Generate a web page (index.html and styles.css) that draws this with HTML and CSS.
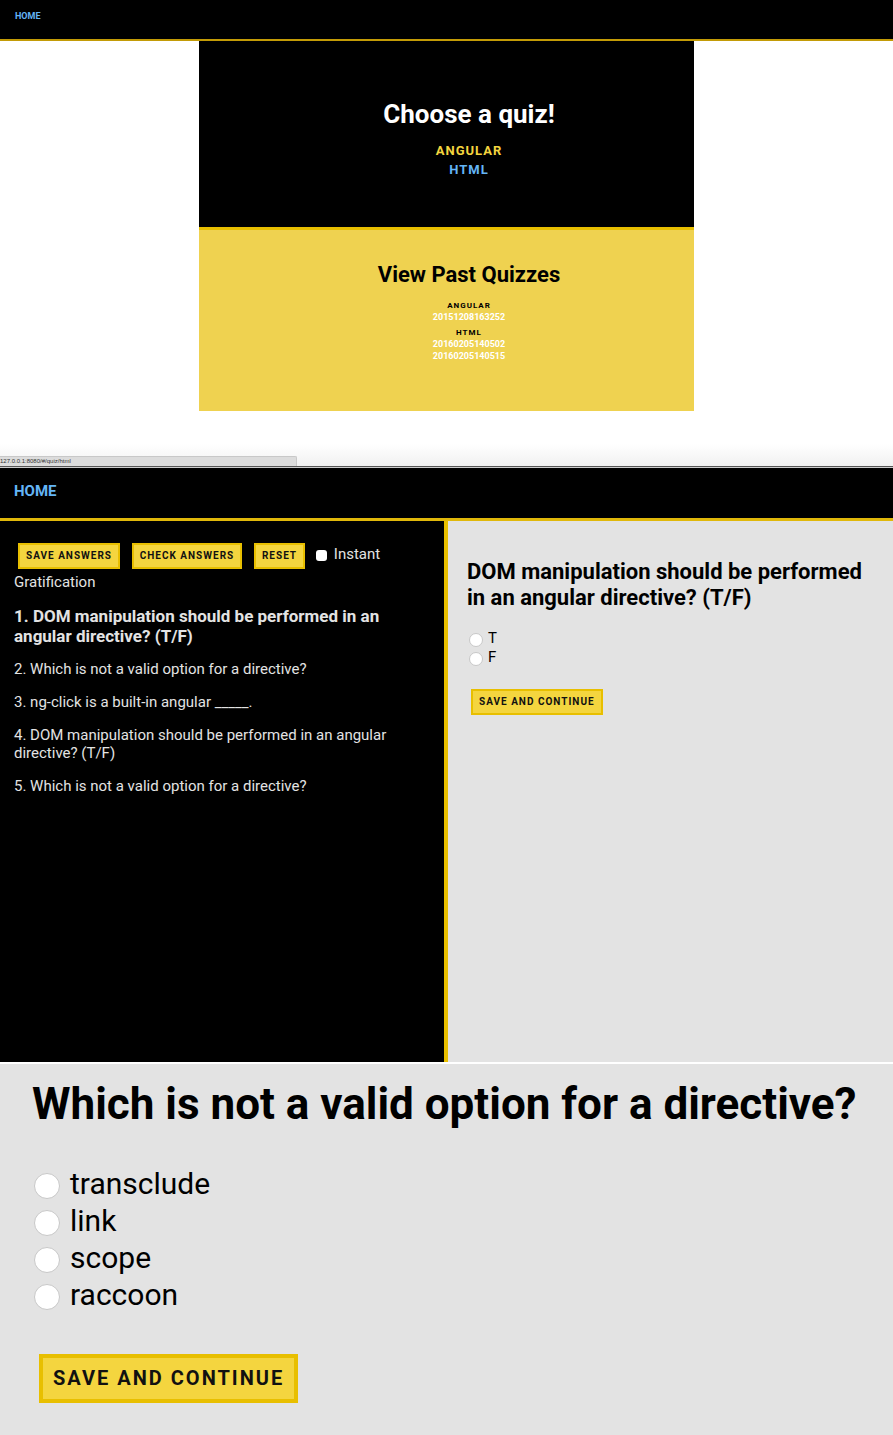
FILE: index.html
```html
<!DOCTYPE html>
<html lang="en">
<head>
<meta charset="utf-8">
<meta name="viewport" content="width=device-width, initial-scale=1">
<title>Quiz</title>
<link rel="stylesheet" href="styles.css">
</head>
<body>
<section class="start">
  <nav class="bar bar-small"><a href="#">HOME</a></nav>
  <main class="card">
    <div class="choose">
      <h1>Choose a quiz!</h1>
      <a class="angular" href="#angular">ANGULAR</a>
      <a class="html" href="#html">HTML</a>
    </div>
    <div class="past">
      <h2>View Past Quizzes</h2>
      <h3>ANGULAR</h3>
      <ul>
        <li><a href="#p1">20151208163252</a></li>
      </ul>
      <h3>HTML</h3>
      <ul>
        <li><a href="#p2">20160205140502</a></li>
        <li><a href="#p3">20160205140515</a></li>
      </ul>
    </div>
  </main>
  <footer class="status"><span>127.0.0.1:8080/#/quiz/html</span></footer>
</section>

<section class="quiz">
  <nav class="bar bar-medium"><a href="#">HOME</a></nav>
  <div class="panes">
    <div class="list">
      <div class="tools">
        <button class="btn" type="button">SAVE ANSWERS</button>
        <button class="btn" type="button">CHECK ANSWERS</button>
        <button class="btn" type="button">RESET</button>
        <input type="checkbox" id="instant"><label for="instant">Instant Gratification</label>
      </div>
      <p class="current">1. DOM manipulation should be performed in an angular directive? (T/F)</p>
      <p>2. Which is not a valid option for a directive?</p>
      <p>3. ng-click is a built-in angular _____.</p>
      <p>4. DOM manipulation should be performed in an angular directive? (T/F)</p>
      <p>5. Which is not a valid option for a directive?</p>
    </div>
    <form class="question">
      <h2>DOM manipulation should be performed in an angular directive? (T/F)</h2>
      <div class="option"><input type="radio" name="tf" id="t"><label for="t">T</label></div>
      <div class="option"><input type="radio" name="tf" id="f"><label for="f">F</label></div>
      <button class="btn" type="button">SAVE AND CONTINUE</button>
    </form>
  </div>
</section>

<form class="question question-large">
  <h2>Which is not a valid option for a directive?</h2>
  <div class="option"><input type="radio" name="opt" id="o1"><label for="o1">transclude</label></div>
  <div class="option"><input type="radio" name="opt" id="o2"><label for="o2">link</label></div>
  <div class="option"><input type="radio" name="opt" id="o3"><label for="o3">scope</label></div>
  <div class="option"><input type="radio" name="opt" id="o4"><label for="o4">raccoon</label></div>
  <button class="btn" type="button">SAVE AND CONTINUE</button>
</form>
</body>
</html>
```
FILE: styles.css
```css
* { box-sizing: border-box; }

body {
  margin: 0;
  min-height: 100vh;
  display: flex;
  flex-direction: column;
  background: #e3e3e3;
  color: #000;
  font-family: Roboto, "Liberation Sans", sans-serif;
}

h1, h2, h3, p, ul { margin: 0; padding: 0; }
ul { list-style: none; }
a { text-decoration: none; }

.bar { background: #000; }
.bar a { color: #64b5f6; font-weight: 700; }
.bar-small { padding: 10px 15px 17px; border-bottom: 2px solid #c39b06; font-size: 9px; line-height: 12px; }
.bar-medium { padding: 13px 14px 17px; border-bottom: 3px solid #e0b80a; font-size: 15px; line-height: 20px; }

/* Start page */
.start { background: #fff; }
.card { width: 55.4%; margin: 0 auto; text-align: center; }

.choose {
  display: flex;
  flex-direction: column;
  align-items: center;
  padding: 55px 0 48px 45px;
  background: #000;
  color: #fff;
  font-weight: 700;
  font-size: 13px;
  line-height: 19px;
  letter-spacing: 1px;
}
.choose h1 { margin-bottom: 9px; font-size: 26px; line-height: 36px; letter-spacing: 0; }
.angular { color: #f4d53f; }
.html { color: #64b5f6; }

.past {
  padding: 31px 0 44px 45px;
  border-top: 3px solid #e8bf00;
  background: #efd250;
  font-size: 9px;
  line-height: 12px;
}
.past h2 { margin-bottom: 12px; font-size: 22px; line-height: 28px; }
.past h3 { font-size: 8px; line-height: 10px; letter-spacing: 1px; }
.past ul { margin-bottom: 5px; font-weight: 700; }
.past a { color: #fff; }

.status {
  display: flex;
  align-items: flex-end;
  height: 56px;
  background: linear-gradient(#fff 60%, #f1f1f1);
  border-bottom: 1px solid #555;
}
.status span {
  width: 297px;
  padding-bottom: 1px;
  border: 1px solid #c8c8c8;
  border-width: 1px 1px 0 0;
  border-radius: 0 2px 0 0;
  background: #dcdcdc;
  color: #333;
  font: 6px/8px "Liberation Sans", sans-serif;
}

/* Quiz page */
.quiz { border-top: 1px solid #ccc; border-bottom: 2px solid #fff; }
.panes { display: grid; grid-template-columns: 448fr 445fr; min-height: 541px; }
.list {
  padding: 20px 40px 20px 14px;
  border-right: 4px solid #e8bf00;
  background: #000;
  color: #e3e3e3;
  font-size: 15px;
  line-height: 18px;
}
.list p { margin-bottom: 15px; }
.list .current { font-size: 17px; line-height: 20px; font-weight: 700; margin-bottom: 14px; }
.tools { line-height: 26px; margin-bottom: 11px; }
.tools .btn { margin: 0 4px; }

.btn {
  padding: 0 6px;
  border: 2px solid #e8bf00;
  border-radius: 0;
  background: #f4d53f;
  color: #111;
  font: 700 10px/22px Roboto, sans-serif;
  letter-spacing: 1px;
}

input { appearance: none; margin: 0; background: #fff; }
input[type="checkbox"] { width: 11px; height: 11px; margin: 0 7px 0 3px; border-radius: 3px; vertical-align: -2px; }
input[type="radio"] {
  width: 14px;
  height: 14px;
  border: 1px solid #c8c8c8;
  border-radius: 50%;
}
input:checked { background: #64b5f6; }

.question { padding: 38px 18px 20px 19px; background: #e3e3e3; font-size: 15px; line-height: 19px; }
.question h2 { margin-bottom: 18px; font-size: 22px; line-height: 26px; }
.option { display: flex; align-items: center; gap: 5px; padding-left: 2px; }
.option input { margin-top: 2px; }
.question .btn { margin: 22px 4px 0; }

.question-large { flex: 1; padding: 12px 32px 30px; font-size: 30px; line-height: 37px; }
.question-large h2 { margin-bottom: 33px; font-size: 44px; line-height: 56px; }
.question-large .option { gap: 10px; }
.question-large input[type="radio"] { width: 26px; height: 26px; margin-top: 4px; }
.question-large .btn {
  margin: 41px 7px 0;
  padding: 0 10px;
  border-width: 4px;
  font-size: 20px;
  line-height: 41px;
  letter-spacing: 2px;
}
```
